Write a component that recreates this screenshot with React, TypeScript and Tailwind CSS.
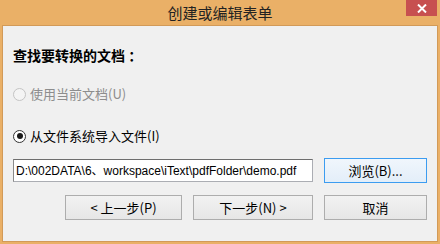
import React from "react";

const FONT = { fontFamily: '"Noto Sans CJK SC", "Noto Sans", sans-serif' };
const PATH_FONT = { fontFamily: '"Liberation Sans", "Noto Sans CJK SC", sans-serif' };

function Radio({ checked, disabled, label }: { checked?: boolean; disabled?: boolean; label: string }) {
  return (
    <div className="flex items-center h-[20px]">
      <span
        className={`w-[13px] h-[13px] rounded-full border flex items-center justify-center ${
          disabled ? "border-[#c4c4c4] bg-[#f4f4f4]" : "border-[#333333] bg-white"
        }`}
      >
        {checked && <span className="w-[6px] h-[6px] rounded-full bg-[#1a1a1a]" />}
      </span>
      <span className={`ml-[4px] text-[13px] leading-[20px] ${disabled ? "text-[#8d8d8d]" : "text-black"}`}>
        {label}
      </span>
    </div>
  );
}

function Btn({ children, w, focused }: { children: React.ReactNode; w: string; focused?: boolean }) {
  return (
    <div
      className={`${w} h-[25px] flex items-center justify-center border text-[13px] text-black bg-gradient-to-b ${
        focused ? "border-[#3c9cf0] from-[#f0f6fc] to-[#e3eef9]" : "border-[#adadad] from-[#f2f2f2] to-[#e6e6e6]"
      }`}
    >
      {children}
    </div>
  );
}

export default function App() {
  return (
    <div className="w-[440px] h-[244px] bg-[#eab067] flex flex-col" style={FONT}>
      <div className="relative h-[25px] flex items-center justify-center">
        <span className="text-[15px] text-[#222222] leading-none">创建或编辑表单</span>
        <div className="absolute right-[3px] top-0 w-[31px] h-[16px] bg-[#c75050] flex items-center justify-center">
          <svg width="10" height="9" viewBox="0 0 10 9">
            <path d="M1 0.5 L9 8.5 M9 0.5 L1 8.5" stroke="white" strokeWidth="2" />
          </svg>
        </div>
      </div>
      <div className="mx-[2px] h-[217px] border border-[#d29a58] bg-[#f0f0f0] pl-[10px] pt-[19px]">
        <div className="text-[14px] font-bold leading-[20px] text-black">查找要转换的文档 ：</div>
        <div className="mt-[19px]">
          <Radio disabled label="使用当前文档(U)" />
        </div>
        <div className="mt-[22px]">
          <Radio checked label="从文件系统导入文件(I)" />
        </div>
        <div className="mt-[12px] flex items-center h-[25px]">
          <div
            className="w-[300px] h-[23px] border border-[#abadb3] border-t-[#6e6e6e] border-l-[#8a8a8a] bg-white flex items-center pl-[2px] text-[12px] text-black whitespace-nowrap overflow-hidden"
            style={PATH_FONT}
          >
            D:\002DATA\6、workspace\iText\pdfFolder\demo.pdf
          </div>
          <div className="ml-[11px]">
            <Btn w="w-[103px]" focused>
              浏览(B)...
            </Btn>
          </div>
        </div>
        <div className="mt-[12px] flex gap-[11px] pl-[52px]">
          <Btn w="w-[117px]">&lt; 上一步(P)</Btn>
          <Btn w="w-[120px]">下一步(N) &gt;</Btn>
          <Btn w="w-[103px]">取消</Btn>
        </div>
      </div>
    </div>
  );
}
